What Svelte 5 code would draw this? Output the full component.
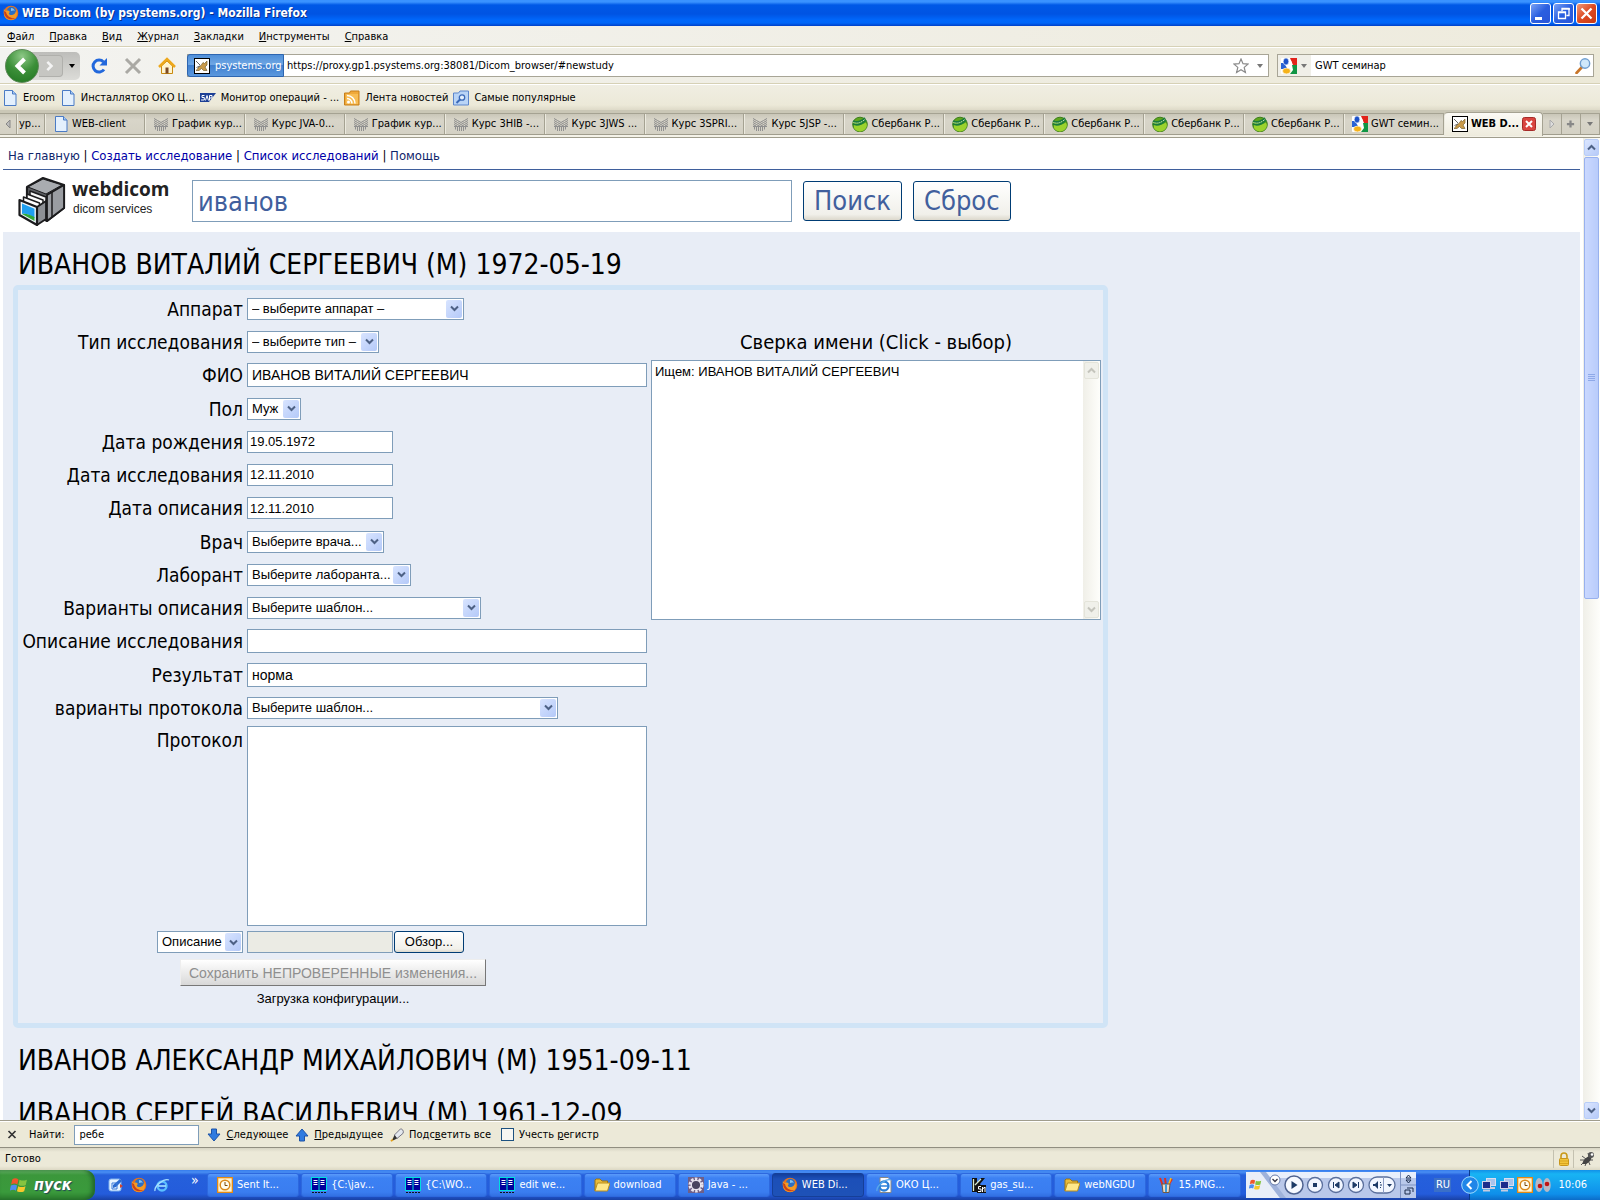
<script>
  const menu = [['Ф', 'айл'], ['П', 'равка'], ['В', 'ид'], ['Ж', 'урнал'], ['З', 'акладки'], ['И', 'нструменты'], ['С', 'правка']];
  const bookmarks = [
    { icon: 'page', label: 'Eroom' },
    { icon: 'page', label: 'Инсталлятор ОКО Ц...' },
    { icon: 'sap', label: 'Монитор операций - ...' },
    { icon: 'rss', label: 'Лента новостей' },
    { icon: 'smart', label: 'Самые популярные' }
  ];
  const tabs = [
    { icon: 'page', label: 'WEB-client' },
    { icon: 'course', label: 'График кур...' },
    { icon: 'course', label: 'Курс JVA-0...' },
    { icon: 'course', label: 'График кур...' },
    { icon: 'course', label: 'Курс 3HIB -...' },
    { icon: 'course', label: 'Курс 3JWS ...' },
    { icon: 'course', label: 'Курс 3SPRI...' },
    { icon: 'course', label: 'Курс 5JSP -...' },
    { icon: 'sber', label: 'Сбербанк Р...' },
    { icon: 'sber', label: 'Сбербанк Р...' },
    { icon: 'sber', label: 'Сбербанк Р...' },
    { icon: 'sber', label: 'Сбербанк Р...' },
    { icon: 'sber', label: 'Сбербанк Р...' },
    { icon: 'google', label: 'GWT семин...' }
  ];
  const fields = [
    { id: 'device', label: 'Аппарат', kind: 'select', value: '– выберите аппарат –', width: 217 },
    { id: 'type', label: 'Тип исследования', kind: 'select', value: '– выберите тип –', width: 132 },
    { id: 'name', label: 'ФИО', kind: 'text', value: 'ИВАНОВ ВИТАЛИЙ СЕРГЕЕВИЧ' },
    { id: 'sex', label: 'Пол', kind: 'select', value: 'Муж', width: 54 },
    { id: 'born', label: 'Дата рождения', kind: 'date', value: '19.05.1972' },
    { id: 'studied', label: 'Дата исследования', kind: 'date', value: '12.11.2010' },
    { id: 'described', label: 'Дата описания', kind: 'date', value: '12.11.2010' },
    { id: 'doctor', label: 'Врач', kind: 'select', value: 'Выберите врача...', width: 137 },
    { id: 'assistant', label: 'Лаборант', kind: 'select', value: 'Выберите лаборанта...', width: 164 },
    { id: 'variants', label: 'Варианты описания', kind: 'select', value: 'Выберите шаблон...', width: 234 },
    { id: 'description', label: 'Описание исследования', kind: 'text', value: '' },
    { id: 'result', label: 'Результат', kind: 'text', value: 'норма' },
    { id: 'protocols', label: 'варианты протокола', kind: 'select', value: 'Выберите шаблон...', width: 311 }
  ];
  const tasks = [
    { icon: 'clock', label: 'Sent It...' },
    { icon: 'far', label: '{C:\\jav...' },
    { icon: 'far', label: '{C:\\WO...' },
    { icon: 'far', label: 'edit we...' },
    { icon: 'folder', label: 'download' },
    { icon: 'gear', label: 'Java - ...' },
    { icon: 'firefox', label: 'WEB Di...', active: true },
    { icon: 'iedoc', label: 'ОКО Ц...' },
    { icon: 'kasm', label: 'gas_su...' },
    { icon: 'folder', label: 'webNGDU' },
    { icon: 'brushes', label: '15.PNG...' }
  ];
</script>

{#snippet icon(name)}
  <svg class="icon" viewBox="0 0 16 16" aria-hidden="true">
    {#if name === 'page'}
      <path d="M2.500.5h8l3.500 3.500v11.500h-11.500z" fill="#e4f0fd" stroke="#4b7bc4" /><path d="M10.500.5v3.500h3.500" fill="#a9ccf5" stroke="#4b7bc4" />
    {:else if name === 'sap'}
      <path d="M0 3h16l-7 9H0z" fill="#1c3f95" /><path d="M4.500 5.500H2v2h2.300V10H1M5.500 10.500 7 5.500l1.500 5M9.500 10.500v-5h2.500v2.500h-2" fill="none" stroke="#fff" />
    {:else if name === 'rss'}
      <path d="M.5 3h5l1-2H15v14H.5z" fill="#f0a93a" stroke="#c77f18" /><rect x="2" y="4" width="12" height="10" fill="#f7bd55" /><circle cx="4.500" cy="12" r="1.500" fill="#fff" /><path d="M3 8.500a5 5 0 0 1 5 5M3 5.500a8 8 0 0 1 8 8" fill="none" stroke="#fff" stroke-width="1.500" />
    {:else if name === 'smart'}
      <path d="M.5 3h5l1.500-2h8.500v14H.5z" fill="#b9d4f6" stroke="#5c86cc" /><circle cx="9" cy="7.500" r="2.700" fill="#e4f0fd" stroke="#3a69b8" stroke-width="1.300" /><path d="m7 9.500-3.500 3.500" stroke="#3a69b8" stroke-width="2" />
    {:else if name === 'course'}
      <path d="M1 2.500 4.500 4.500 8 6.500 11.500 4.500 15 2.500M1 4.500l3.500 2L8 8.500 11.500 6.500 15 4.500M1 6.500l3.500 2L8 10.500l3.500-2 3.500-2M1 8.500l3 1.500M15 8.500 12 10" fill="none" stroke="#8b8b8b" /><path d="M2.500 10.500v3M4.500 10.500v4.500M6.500 10.500v4.500M8.500 10.500v4.500M10.500 10.500v4.500M12.500 10.500v3M1 10.500h14" stroke="#909090" />
    {:else if name === 'sber'}
      <circle cx="8" cy="8.500" r="7.300" fill="#5fa61c" stroke="#3c7d1c" /><path d="M2 12a7 7 0 0 0 12 0c2-3 0-6-1-5-4 3-9 1-11 1z" fill="#9bd22e" /><path d="M1 5c4 2 8 1 12-3M1 8c5 2 9 0 13-4" stroke="#1c7c3c" stroke-width="1.800" fill="none" /><path d="M1.500 6.500c4 1.500 8 0 11.500-3.200" stroke="#e4fadc" fill="none" stroke-dasharray="1 1" />
    {:else if name === 'google'}
      <rect width="16" height="16" rx="1" fill="#fff" /><path d="M9 0h7v7h-4z" fill="#e2231a" /><path d="M11 7h5v9H9l3-4z" fill="#109544" /><path d="M0 5h3l3 5-3 1H0z" fill="#2a62d4" /><ellipse cx="5" cy="3.500" rx="2.800" ry="3.500" fill="#1d52c8" stroke="#fff" stroke-width=".6" /><ellipse cx="5.500" cy="13" rx="4" ry="2.900" fill="#f5b21a" stroke="#fff" stroke-width=".6" /><path d="M8.500 3c4 3-1 3 1 6" stroke="#fff" stroke-width="2" fill="none" />
    {:else if name === 'tomcat'}
      <rect x=".5" y=".5" width="15" height="15" fill="#fff" stroke="#000" /><path d="M2 12.500c2-1 2-4 5-5l2-3 1.500 1L13 3v4l-2 2 2 3.500H9.500l-2-2-2.500 2z" fill="#c99a4a" stroke="#7a6432" stroke-width=".7" /><path d="M2 3l4 4M2.500 9.500 6 8" stroke="#666" />
    {:else if name === 'firefox'}
      <circle cx="8" cy="8" r="7.300" fill="#e8731a" /><circle cx="8.500" cy="6.500" r="4.700" fill="#2c6fc4" /><path d="M8 3c2 0 3 1 4 3-2-1-3 0-4 0z" fill="#86c4f0" /><path d="M1 3c0 2 1 3 2 3 2-1 3 0 4 1-2 1-1 3 1 3 3 0 5-2 5-5 2 4 1 10-5 10S0 10 1 3z" fill="#f39a25" /><path d="M1 6c0 8 7 10 12 7-4 1-9-1-10-6z" fill="#c9401b" />
    {:else if name === 'clock'}
      <rect x=".5" y=".5" width="15" height="15" fill="#fff3d2" stroke="#e58a12" stroke-width="1.600" /><circle cx="8" cy="8" r="4.800" fill="#fffdf0" stroke="#d98a1c" stroke-width="1.500" /><path d="M8 5v3.500h2.500" fill="none" stroke="#7a4a0a" />
    {:else if name === 'far'}
      <rect x=".5" y=".5" width="15" height="13" fill="#00009c" stroke="#00dede" /><path d="M2.500 3.500h4M2.500 5.500h4M2.500 7.500h4M9.500 3.500h4M9.500 5.500h4M9.500 7.500h4" stroke="#fff" /><path d="M8 0v14" stroke="#00dede" /><path d="M1 15.500h14" stroke="#111" stroke-dasharray="2 1" />
    {:else if name === 'folder'}
      <path d="M1 14V3l1-1h4l2 2h5.500v2" fill="#e9bb3a" stroke="#9c7410" /><path d="M1 14 3.500 6H16l-2.500 8z" fill="#ffe88a" stroke="#b98d1c" />
    {:else if name === 'gear'}
      <rect width="16" height="16" fill="#6f5f88" /><circle cx="8" cy="8" r="5.800" fill="none" stroke="#e8e4ee" stroke-width="3.500" stroke-dasharray="2.400 1.250" /><circle cx="8" cy="8" r="4.700" fill="#4a4560" stroke="#e8e4ee" stroke-width="1.300" />
    {:else if name === 'ie' || name === 'iedoc'}
      {#if name === 'iedoc'}<path d="M4 .5h8l3 3v12H4z" fill="#fff" stroke="#888" />{/if}
      <circle cx="8" cy="9" r="4.500" fill="none" stroke={name === 'ie' ? '#5cc0ff' : '#2a7fd8'} stroke-width="2.300" /><path d="M4 9h8" stroke={name === 'ie' ? '#9fdcff' : '#2a7fd8'} stroke-width="1.700" /><path d="M1 14C0 9 10 1 15 3" fill="none" stroke={name === 'ie' ? '#a7e0ff' : '#5aa8ea'} stroke-width="1.300" />
    {:else if name === 'kasm'}
      <path d="M2 1h5v5l4-5h4l-5 6 4 6H9L7 10v5H2z" fill="#111" /><path d="M3.500 2v12M5 8l6-6" stroke="#d8ead0" stroke-width="1.300" /><path d="M7 8h9v8H7z" fill="#111" /><path d="M11 9.500H8.500V12H11v2.500H8M12.500 15v-5l1 1.500 1.500-1.500v5" fill="none" stroke="#fff" />
    {:else if name === 'brushes'}
      <path d="M5 9 2 1M8 9 7 1M10 9l4-7" stroke="#e03020" stroke-width="2" /><path d="m10 9 3-8" stroke="#f0c020" stroke-width="1.500" /><path d="M4 7h8l-1 8.500H5z" fill="#e8d9c6" stroke="#6d5a48" /><path d="M8 7v8" stroke="#3a9ad8" stroke-width="2" />
    {:else if name === 'mail'}
      <rect x="1" y="2" width="12" height="12" rx="2" fill="#eaf4ff" stroke="#7fb2ee" /><path d="M5 8 12 2l2 2-6 6-3 1z" fill="#2c6ad0" /><path d="M4 6h5v6H4z" fill="none" stroke="#3a79d8" /><path d="m12 7 3 2-3 2" fill="#d8432a" />
    {:else if name === 'net'}
      <rect x="5.500" y="1.500" width="9" height="7" fill="#a8c4ec" stroke="#d8def0" /><rect x="1.500" y="4.500" width="8" height="7" fill="#1c2c8c" stroke="#d0d4e8" /><path d="M2 13.500h7M9 11h5" stroke="#c8cce0" stroke-width="2" />
    {:else if name === 'dots'}
      <ellipse cx="4" cy="8" rx="3.700" ry="7" fill="#b8b8c4" /><ellipse cx="12" cy="8" rx="3.700" ry="7" fill="#b8b8c4" /><circle cx="5" cy="9" r="2.300" fill="#c01414" /><circle cx="12" cy="7" r="2.300" fill="#c01414" />
    {:else if name === 'flag'}
      <path d="M2 3c2-1.500 4-1 5.500 0L6.500 7.500C5 6.500 3 6.500 1 7.500z" fill="#f0562a" /><path d="M8.500 3.300c2 1 4 1 6.500 0L14 8c-2 1-4 1-6.500 0z" fill="#86c440" /><path d="M.8 8.500c2-1 4-1 5.500 0L5.200 13C4 12 2 12-.2 13z" fill="#4f8df0" /><path d="M7.300 9c2 1 4 1 6.500 0l-1.200 4.500c-2 1-4 1-6.400 0z" fill="#f8c82c" />
    {:else if name === 'lock'}
      <path d="M5 8V5a3 3 0 0 1 6 0v3" fill="none" stroke="#c99a1a" stroke-width="1.600" /><rect x="3.500" y="7.500" width="9" height="7" rx="1" fill="#f2c53a" stroke="#c8951a" /><path d="M4 10h8M4 12.500h8" stroke="#d9a520" />
    {:else if name === 'bug'}
      <path d="M2 14 12 4M1 9h5M3 5l4 3M6 15l2-5M11 14 9 9M14 9h-4M9 2l1 4" stroke="#555" /><path d="M4 13c-2-2 4-8 7-8s1 6-4 8z" fill="#444" /><circle cx="12" cy="4" r="3" fill="#555" /><circle cx="13" cy="3.500" r="1.300" fill="#fff" />
    {:else if name === 'pen'}
      <path d="M1 15c3-2 3-3 5-4" stroke="#e0a020" stroke-width="2" fill="none" /><path d="m5 8 3 4 7-6c1-3-1-5-3-5z" fill="#e4e8ee" stroke="#667" /><path d="m5 8 3 4-4 2-1-1z" fill="#333" />
    {:else if name === 'magnifier'}
      <path d="m7 9-5.500 6" stroke="#c8762a" stroke-width="2.600" stroke-linecap="round" /><circle cx="10" cy="5.500" r="4.700" fill="#cfe8fb" stroke="#6f9ed0" stroke-width="1.400" />
    {:else if name === 'star'}
      <path d="m8 1 2 4.700 5 .4-3.800 3.300L12.400 14.500 8 11.800l-4.400 2.700 1.200-5.100L1 6.100l5-.4z" fill="#fff" stroke="#8a8a8a" stroke-width="1.200" />
    {/if}
  </svg>
{/snippet}

{#snippet chevron(dir)}
  <svg class="chev" viewBox="0 0 9 7" aria-hidden="true">
    <path d={dir === 'up' ? 'M1 5.500 4.500 2 8 5.500' : 'M1 1.500 4.500 5 8 1.500'} fill="none" stroke="currentColor" stroke-width="2" />
  </svg>
{/snippet}

{#snippet picker(id, value, width, label)}
  <span class="picker" style="width: {width}px">
    <select {id} aria-label={label}><option>{value}</option></select>
    <span class="drop">{@render chevron('down')}</span>
  </span>
{/snippet}

<div class="desktop">
  <header class="title">
    {@render icon('firefox')}
    <strong>WEB Dicom (by psystems.org) - Mozilla Firefox</strong>
    <button class="win" aria-label="Свернуть"><svg viewBox="0 0 21 21"><path d="M4 14.500h7" stroke="#fff" stroke-width="3" /></svg></button>
    <button class="win" aria-label="Восстановить"><svg viewBox="0 0 21 21"><path d="M8 7V4.500h7v7h-2.500M4.500 8h7v6.500h-7zM4 8.500h8M8 5h8" fill="none" stroke="#fff" stroke-width="1.300" /></svg></button>
    <button class="win close" aria-label="Закрыть"><svg viewBox="0 0 21 21"><path d="m4.500 4.500 10 10m0-10-10 10" stroke="#fff" stroke-width="2.300" /></svg></button>
  </header>

  <nav class="menu">
    {#each menu as [key, rest]}<button><u>{key}</u>{rest}</button>{/each}
  </nav>

  <div class="toolbar">
    <div class="history">
      <button class="back" aria-label="Назад"><svg viewBox="0 0 32 32"><path d="m18.500 9-7 7 7 7" fill="none" stroke="#fff" stroke-width="4" /></svg></button>
      <button class="fwd" aria-label="Вперёд"><svg viewBox="0 0 24 24"><path d="m10 7 5 5-5 5" fill="none" stroke="#f4f4f4" stroke-width="3" /></svg></button>
      <span class="caret dark"></span>
    </div>
    <button class="tool" aria-label="Обновить"><svg viewBox="0 0 18 18"><path d="M14 12.500A6 6 0 1 1 13.500 5" fill="none" stroke="#2268dc" stroke-width="3" /><path d="M17 1v7.500H9.500z" fill="#2268dc" /></svg></button>
    <button class="tool" aria-label="Остановить"><svg viewBox="0 0 18 18"><path d="m2 2 14 14m0-14L2 16" stroke="#aaa9a4" stroke-width="3" /></svg></button>
    <button class="tool" aria-label="Домой"><svg viewBox="0 0 18 18"><path d="M3.500 9v7.500h11V9L9 4z" fill="#fff4cf" stroke="#c98a10" /><path d="M1 10 9 2l8 8" fill="none" stroke="#eda81c" stroke-width="2.500" /><path d="M7.500 10.500h3v6h-3z" fill="#7c4a24" /></svg></button>
    <div class="url">
      <span class="identity">{@render icon('tomcat')}psystems.org</span>
      <input aria-label="Адрес" value="https://proxy.gp1.psystems.org:38081/Dicom_browser/#newstudy" />
      {@render icon('star')}
      <span class="caret"></span>
    </div>
    <div class="search">
      <span class="engine">{@render icon('google')}<span class="caret"></span></span>
      <input aria-label="Поиск" value="GWT семинар" />
      {@render icon('magnifier')}
    </div>
  </div>

  <nav class="bookmarks">
    {#each bookmarks as b}<button>{@render icon(b.icon)}{b.label}</button>{/each}
  </nav>

  <div class="tabs">
    <button class="scroll" aria-label="Влево"><svg viewBox="0 0 6 10"><path d="M5 1 1 5l4 4z" fill="#bbb" stroke="#888" /></svg></button>
    <button class="tab part">ур...</button>
    {#each tabs as t}<button class="tab">{@render icon(t.icon)}<span>{t.label}</span></button>{/each}
    <button class="tab active">{@render icon('tomcat')}<span>WEB D...</span>
      <svg class="x" viewBox="0 0 14 14"><rect x=".5" y=".5" width="13" height="13" rx="2" fill="#d9453f" stroke="#a52a28" /><path d="m4 4 6 6m0-6-6 6" stroke="#fff" stroke-width="2" /></svg>
    </button>
    <button class="scroll" aria-label="Вправо"><svg viewBox="0 0 6 10"><path d="m1 1 4 4-4 4z" fill="#ddd" stroke="#aaa" /></svg></button>
    <button class="scroll" aria-label="Новая вкладка"><svg class="plus" viewBox="0 0 10 10"><path d="M5 1v8M1 5h8" stroke="#888" stroke-width="2.500" /></svg></button>
    <button class="scroll" aria-label="Список вкладок"><span class="caret"></span></button>
  </div>

  <div class="view">
    <main>
      <nav class="links">
        <a href="#main">На главную</a> | <a class="fresh" href="#newstudy">Создать исследование</a> | <a class="fresh" href="#studies">Список исследований</a> | <a href="#help">Помощь</a>
      </nav>
      <form class="find">
        <div class="logo">
          <svg viewBox="0 0 48 50" aria-hidden="true">
            <g stroke="#1b1b1d" stroke-linejoin="round">
              <path d="M9 11 25 2l21 7v23L29 45 9 34z" fill="#5c5e62" stroke-width="2.200" />
              <path d="M10 11 25 3l19 6-16 9z" fill="#a9acb0" stroke-width="1" />
              <path d="m29 19 17-10v23L29 45z" fill="#9a9da2" stroke-width="1.800" />
              <path d="m34 16v25" stroke-width="1.500" />
              <path d="m12 15 16 6v18l-16-9z" fill="#f4f4f4" stroke-width="1.500" />
              <path d="m9 18 16 6v18L9 33z" fill="#fff" stroke-width="1.500" />
              <path d="m5.500 21 16 6v18l-16-9z" fill="#fff" stroke-width="1.500" />
              <path d="m19 31 9-6v18l-9 6z" fill="#8d9095" stroke-width="1.800" />
              <path d="m1.500 24 17.500 7v18L1.500 39z" fill="#eef6fb" stroke-width="2.200" />
            </g>
            <path d="m4 27.500 12.500 5.200v9.300C12 39 8 37 4 38z" fill="#1f9ff0" />
            <path d="M4 38c4-1 8 1 12.500 3v4z" fill="#2fa83a" />
          </svg>
          <div><b>webdicom</b><small>dicom services</small></div>
        </div>
        <input aria-label="Пациент" value="иванов" />
        <button type="button">Поиск</button>
        <button type="button">Сброс</button>
      </form>

      <section class="results">
        <h2>ИВАНОВ ВИТАЛИЙ СЕРГЕЕВИЧ (М) 1972-05-19</h2>
        <form class="study">
          <div class="fields">
            {#each fields as f}
              <label for={f.id}>{f.label}</label>
              <div class="control">
                {#if f.kind === 'select'}
                  {@render picker(f.id, f.value, f.width, null)}
                {:else}
                  <input id={f.id} class={f.kind} value={f.value} />
                {/if}
              </div>
            {/each}
            <label class="top" for="protocol">Протокол</label>
            <textarea id="protocol"></textarea>
            <div class="kind">{@render picker('filekind', 'Описание', 86, 'Вид файла')}</div>
            <div class="file"><input class="date" aria-label="Файл" disabled /><button type="button">Обзор...</button></div>
            <div class="save">
              <button type="button" disabled>Сохранить НЕПРОВЕРЕННЫЕ изменения...</button>
              <p>Загрузка конфигурации...</p>
            </div>
          </div>
          <div class="check">
            <h3>Сверка имени (Click - выбор)</h3>
            <div class="matches">
              <p>Ищем: ИВАНОВ ВИТАЛИЙ СЕРГЕЕВИЧ</p>
              <div class="bar off"><span class="arrow">{@render chevron('up')}</span><span class="arrow">{@render chevron('down')}</span></div>
            </div>
          </div>
        </form>
        <h2>ИВАНОВ АЛЕКСАНДР МИХАЙЛОВИЧ (М) 1951-09-11</h2>
        <h2>ИВАНОВ СЕРГЕЙ ВАСИЛЬЕВИЧ (М) 1961-12-09</h2>
      </section>
    </main>
    <div class="bar">
      <span class="arrow">{@render chevron('up')}</span>
      <span class="thumb"><svg viewBox="0 0 8 8"><path d="M0 .5h7M0 2.500h7M0 4.500h7M0 6.500h7" stroke="#8fa9e8" /></svg></span>
      <span class="rest"></span>
      <span class="arrow">{@render chevron('down')}</span>
    </div>
  </div>

  <div class="findbar">
    <button class="closefind" aria-label="Закрыть панель"><svg viewBox="0 0 9 9"><path d="m1 1 7 7m0-7L1 8" stroke="#333" stroke-width="1.700" /></svg></button>
    <label for="findtext">Найти:</label>
    <input id="findtext" value="ребе" />
    <button><svg viewBox="0 0 13 14"><path d="M4 1h5v5h3.500l-6 7-6-7H4z" fill="#2f7be0" stroke="#1c53a8" /></svg><span><u>С</u>ледующее</span></button>
    <button><svg viewBox="0 0 13 14"><path d="M4 13h5V8h3.500l-6-7-6 7H4z" fill="#2f7be0" stroke="#1c53a8" /></svg><span><u>П</u>редыдущее</span></button>
    <button>{@render icon('pen')}<span>Подс<u>в</u>етить все</span></button>
    <label class="case"><input type="checkbox" /><span>Учесть <u>р</u>егистр</span></label>
  </div>

  <div class="status">
    <span class="ready">Готово</span>
    <span class="cell">{@render icon('lock')}</span>
    <span class="cell">{@render icon('bug')}</span>
  </div>

  <footer class="taskbar">
    <button class="start">{@render icon('flag')}<b>пуск</b></button>
    <div class="quick">{@render icon('mail')}{@render icon('firefox')}{@render icon('ie')}<span>»</span></div>
    <div class="tasks">
      {#each tasks as t}<button class:active={t.active}>{@render icon(t.icon)}<span>{t.label}</span></button>{/each}
    </div>
    <div class="media">
      <svg viewBox="0 0 170 26" aria-hidden="true">
        <rect width="170" height="26" fill="#b9c8ea" /><path d="M0 0h170v6H0z" fill="#e8effc" /><path d="M0 0h14l20 26H0z" fill="#e9eef8" /><path d="M14 0h6l20 26h-6z" fill="#9fb2da" />
        <circle cx="29" cy="8" r="5" fill="#fff" stroke="#667aa8" /><path d="m26.500 7 2.500 2.500L31.500 7" fill="none" stroke="#334" stroke-width="1.300" />
        <circle cx="48" cy="13" r="9" fill="#f6f9ff" stroke="#4f6390" stroke-width="1.500" /><path d="m45.500 9 6 4-6 4z" fill="#1d3a66" />
        <circle cx="69" cy="13" r="7.500" fill="#f2f6ff" stroke="#5a6f9c" stroke-width="1.300" /><path d="M67 11h4v4h-4z" fill="#1d3a66" />
        <circle cx="90" cy="13" r="7.500" fill="#f2f6ff" stroke="#5a6f9c" stroke-width="1.300" /><path d="M87.500 10v6M93 10v6l-4-3z" fill="#1d3a66" stroke="#1d3a66" />
        <circle cx="110" cy="13" r="7.500" fill="#f2f6ff" stroke="#5a6f9c" stroke-width="1.300" /><path d="M112.500 10v6M107 10v6l4-3z" fill="#1d3a66" stroke="#1d3a66" />
        <rect x="123" y="5" width="26" height="16" rx="8" fill="#f2f6ff" stroke="#5a6f9c" stroke-width="1.300" /><path d="M137.500 5v16" stroke="#8c9cc4" /><path d="M127 12h2l3-3v8l-3-3h-2zM141 12h5l-2.500 3z" fill="#1d3a66" /><path d="M134 11l1-1m-1 3h2m-2 2 1 1" stroke="#1d3a66" />
        <path d="M154.500 0v26M155 13h15" stroke="#7f92c0" /><path d="m160 6 2.500-3L165 6zM160 8l2.500 3L165 8zM159 18h5v4h-5zM161 16h6v4" fill="none" stroke="#1c2c4c" />
      </svg>
      <span class="wm">{@render icon('flag')}</span>
    </div>
    <span class="lang">RU</span>
    <div class="tray">
      <svg class="hide" viewBox="0 0 18 18"><circle cx="9" cy="9" r="8.300" fill="#1f86e8" stroke="#9fdcff" /><path d="m10.500 5-4 4 4 4" fill="none" stroke="#fff" stroke-width="2" /></svg>
      {@render icon('net')}{@render icon('net')}{@render icon('clock')}{@render icon('dots')}
      <time>10:06</time>
    </div>
  </footer>
</div>

<style>
  :global(body) { margin: 0; }
  * { box-sizing: border-box; }
  .desktop { height: 100vh; display: flex; flex-direction: column; overflow: hidden; background: #ece9d8; color: #000; font: 11px/14px 'DejaVu Sans Condensed', 'Noto Sans', sans-serif; }
  button, input, select, textarea { font: inherit; color: inherit; border-radius: 0; margin: 0; }
  button { border: 0; background: none; padding: 0; white-space: nowrap; }
  input { border: 0; outline: 0; min-width: 0; }
  .icon { width: 16px; height: 16px; flex: none; }
  .caret { width: 0; height: 0; flex: none; border: 3px solid transparent; border-top: 4px solid #777; border-bottom: 0; }
  .dark { border-top-color: #000; }

  .title { height: 26px; flex: none; display: flex; align-items: center; gap: 2px; padding: 0 3px; background: linear-gradient(#3a92ff 0 2px, #0058e6 5px, #0054e3 14px, #0067fb 20px, #0066f8 23px, #0040c8); color: #fff; }
  .title strong { flex: 1; padding-left: 1px; font-size: 12px; font-weight: 700; text-shadow: 1px 1px #0a2f8a; }
  .win { width: 21px; height: 21px; border: 1px solid #fff; border-radius: 3px; background: linear-gradient(135deg, #7aa2f5, #2a5fe0 50%, #2a55d8); }
  .win svg { display: block; width: 21px; height: 21px; }
  .close { background: linear-gradient(135deg, #f0997a, #dd4a22 50%, #c93a14); }

  .menu { height: 21px; flex: none; display: flex; gap: 15px; align-items: center; padding: 1px 7px 0; background: linear-gradient(90deg, #f3f3f0, #eeebdd); border-bottom: 1px solid #d6d1b6; }
  .toolbar { height: 37px; flex: none; display: flex; align-items: center; background: linear-gradient(90deg, #f3f3f0, #ece9d8); border-top: 1px solid #fff; border-bottom: 1px solid #d6d1b6; padding: 0 6px 0 5px; }
  .history { display: flex; align-items: center; height: 28px; width: 75px; border-radius: 14px 5px 5px 14px; background: linear-gradient(#bdbdba, #dcdcd8); }
  .back { width: 34px; height: 34px; flex: none; border-radius: 50%; border: 1px solid #5d8a58; background: radial-gradient(circle at 50% 20%, #8dc886, #3b8f38 50%, #1f7420); }
  .back svg { display: block; }
  .fwd { width: 24px; height: 22px; margin-right: 6px; border: 1px solid #b0b0ac; border-left: 0; border-radius: 0 4px 4px 0; background: #c6c6c2; }
  .fwd svg { display: block; height: 20px; }
  .tool { width: 18px; height: 18px; margin-left: 16px; }
  .tool:first-of-type { margin-left: 10px; }
  .tool svg { display: block; }
  .url, .search { height: 23px; display: flex; align-items: center; background: #fff; border: 1px solid #a8a596; }
  .url { flex: 1; margin-left: 11px; gap: 8px; padding-right: 5px; }
  .url input { flex: 1; height: 21px; margin-left: -5px; padding: 0; }
  .identity { height: 23px; margin: -1px 0 -1px -1px; width: 97px; flex: none; display: flex; align-items: center; gap: 5px; padding-left: 6px; color: #fff; border: 1px solid #2d65b0; border-radius: 3px 0 0 3px; background: linear-gradient(#4f8fd8, #6fa6e4 45%, #3f7fcf 50%, #5b98de); }
  .search { width: 317px; margin-left: 8px; padding-right: 2px; }
  .engine { height: 21px; width: 33px; flex: none; display: flex; align-items: center; gap: 4px; padding-left: 3px; background: #f0efe8; }
  .search input { flex: 1; padding: 0 4px; }

  .bookmarks { height: 26px; flex: none; display: flex; align-items: center; gap: 5px; padding: 0 3px 0 2px; border-top: 1px solid #fff; background: linear-gradient(#f0eee2, #ece9d8 80%, #dedac8); }
  .bookmarks button { display: flex; align-items: center; gap: 5px; }

  .tabs { height: 28px; flex: none; display: flex; align-items: flex-start; padding-top: 3px; background: linear-gradient(#cac7b6 0 3px, #c9c6b5 24px, #a09d8d 24px 25px, #f4f2e8 25px 27px, #a09d8d 27px); }
  .tab, .scroll { height: 21px; display: flex; align-items: center; border: 1px solid #a5a292; border-left: 0; border-bottom: 0; background: linear-gradient(#c9c6b8, #d8d5c9 30%, #d4d1c4); }
  .tab { flex: 1 1 0; min-width: 0; overflow: hidden; gap: 3px; padding-left: 8px; box-shadow: inset 1px 0 #eceadf; }
  .tab span { overflow: hidden; }
  .part { flex: 0 0 28px; padding-left: 2px; }
  .scroll { width: 19px; flex: none; justify-content: center; }
  .scroll:first-child { width: 17px; }
  .scroll svg { width: 6px; height: 10px; }
  .scroll .plus { width: 9px; }
  .active.tab { height: 24px; flex: 0 0 99px; margin-top: -1px; padding: 0 0 1px 8px; font-weight: 700; background: linear-gradient(#fbfaf5, #eeebdd); border-radius: 4px 4px 0 0; }
  .x { width: 14px; height: 14px; flex: none; }

  .view { flex: 1; min-height: 0; display: flex; background: #fff; border-bottom: 1px solid #a09d8d; }
  main { flex: 1; min-width: 0; overflow: hidden; padding: 0 3px; }
  .links { height: 32px; border-bottom: 1px solid #3f5f9c; padding: 10px 5px 0; font-size: 13px; line-height: 16px; white-space: nowrap; }
  a { color: #10256b; text-decoration: none; }
  .fresh { color: #0000a8; }
  .find { height: 62px; display: flex; align-items: center; color: #415f9d; font-size: 27px; }
  .logo { width: 189px; flex: none; display: flex; gap: 4px; padding-left: 15px; color: #222; }
  .logo svg { width: 48px; height: 50px; flex: none; }
  .logo b, .logo small { display: block; }
  .logo b { font: 700 19px/26px 'Open Sans', sans-serif; padding-left: 2px; }
  .logo small { font: 12px/14px 'Liberation Sans', sans-serif; padding-left: 3px; }
  .find input { width: 600px; height: 42px; border: 1px solid #7f9db9; padding: 0 5px; }
  .find button { height: 40px; padding: 0 10px; margin-left: 11px; }
  .find button, .file button { border: 1px solid #003c74; border-radius: 3px; background: linear-gradient(#fff, #f1f0ea 85%, #dcd8cc); }

  .results { background: #e8edf6; padding: 10px 10px 400px; }
  h2 { margin: 0; padding: 2px 0 0 5px; font-size: 28px; font-weight: 400; line-height: 41px; height: 43px; white-space: nowrap; }
  h2 + h2, .study + h2 { margin-top: 10px; }
  .study { display: flex; gap: 4px; width: max-content; border: 5px solid #d0e4f6; border-radius: 5px; padding: 2px 2px 0; font: 13px/16px 'Liberation Sans', sans-serif; height: 743px; }
  .fields { display: grid; grid-template-columns: 223px 400px; column-gap: 4px; grid-template-rows: 33px 33px 34px 33px 33px 33px 34px 33px 33px 33px 34px 33px 33px 205px 26px 1fr; align-items: center; }
  label, h3 { font: 20px/24px 'DejaVu Sans Condensed', 'Noto Sans', sans-serif; white-space: nowrap; }
  .fields label { justify-self: end; font-size: 19px; }
  .control { display: flex; }
  .picker { display: inline-grid; height: 22px; }
  .picker select, .drop { grid-area: 1 / 1; }
  .picker select { appearance: none; width: 100%; background: #fff; border: 1px solid #7f9db9; padding: 0 4px; outline: 0; }
  .drop { justify-self: end; align-self: center; width: 16px; height: 18px; margin-right: 2px; display: grid; place-items: center; border-radius: 2px; background: linear-gradient(135deg, #d8e4ff, #b4c9f8); color: #4d6185; pointer-events: none; }
  .chev { width: 9px; height: 7px; }
  .text, .date { border: 1px solid #7f9db9; background: #fff; }
  .text { width: 100%; height: 24px; padding: 0 4px; font-size: 14px; }
  .date { width: 146px; height: 22px; padding: 0 2px; }
  .date:disabled { background: #ebebe4; }
  .fields .top { align-self: start; padding-top: 4px; }
  textarea { width: 400px; height: 200px; align-self: start; margin-top: 2px; border: 1px solid #7f9db9; resize: none; outline: 0; background: #fff; display: block; }
  .kind { justify-self: end; display: flex; }
  .file { display: flex; gap: 1px; }
  .file button { width: 70px; height: 22px; }
  .save { grid-column: 1 / 3; align-self: start; width: 626px; padding-top: 4px; }
  .save button { display: block; margin-left: 160px; width: 306px; height: 27px; font-size: 14px; color: #8f8f8f; border: 1px solid #777; border-top-color: #eee; border-left-color: #eee; background: linear-gradient(#fff, #d8d8d8); }
  .save p { margin: 5px 0 0; width: 626px; text-align: center; }
  .check { width: 450px; padding-top: 38px; }
  h3 { margin: 0 0 6px; font-weight: 400; text-align: center; }
  .matches { height: 260px; display: flex; justify-content: space-between; background: #fff; border: 1px solid #7f9db9; }
  .matches p { margin: 3px; }
  .bar { width: 17px; flex: none; display: flex; flex-direction: column; justify-content: space-between; background: linear-gradient(90deg, #f0efe8, #fefefb); color: #4d6185; }
  .arrow { height: 17px; margin: 1px; flex: none; display: grid; place-items: center; border-radius: 2px; background: linear-gradient(135deg, #dbe6ff, #b6caf8); border: 1px solid #b8cdf8; }
  .off { color: #c4c4bc; }
  .off .arrow { background: #f0f0ea; border-color: #e4e4da; }
  .thumb { flex: 443; margin: 0 1px; display: grid; place-items: center; border: 1px solid #98b1ee; border-radius: 2px; background: linear-gradient(90deg, #cad8ff, #b9ccfb); }
  .thumb svg { width: 8px; height: 8px; }
  .rest { flex: 505; }

  .findbar { height: 27px; flex: none; display: flex; align-items: center; padding-left: 7px; border-top: 1px solid #fff; border-bottom: 1px solid #918e80; }
  .findbar label { font: inherit; }
  .findbar button { display: flex; align-items: center; gap: 5px; margin-right: 7px; }
  .findbar button svg { width: 14px; height: 14px; }
  .findbar .closefind { margin-right: 12px; }
  .findbar .closefind svg { width: 10px; height: 9px; }
  #findtext { width: 125px; height: 20px; margin: 0 8px 0 10px; padding: 0 4px; border: 1px solid #7f9db9; background: #fff; }
  .findbar .case { display: flex; align-items: center; gap: 5px; margin-left: 3px; }
  .case input { appearance: none; width: 13px; height: 13px; border: 1px solid #1c5180; background: #f6f6f2; }
  .status { height: 22px; flex: none; display: flex; align-items: center; padding-left: 5px; background: linear-gradient(#d8d5c4, #ece9d8 4px 18px, #dcd8c4); }
  .ready { flex: 1; }
  .cell { width: 20px; height: 18px; display: grid; place-items: center; border-left: 1px solid #c4c1b0; }
  .cell + .cell { width: 27px; }

  .taskbar { height: 30px; flex: none; display: flex; align-items: center; color: #fff; background: linear-gradient(#3a80ee 0 1px, #4a90f4 2px, #2560dc 5px, #245cdb 24px, #1941a5); }
  .start { align-self: stretch; width: 95px; flex: none; display: flex; align-items: center; gap: 6px; padding-left: 10px; border-radius: 0 10px 10px 0; background: linear-gradient(#6cb86c, #3b973b 5px, #3a9a3c 22px, #2a7a2c); box-shadow: inset -3px 0 4px #22662a; }
  .start .icon { width: 18px; height: 18px; }
  .start b { font: italic 700 16px/20px 'DejaVu Sans Condensed', 'Open Sans', sans-serif; text-shadow: 1px 1px 1px #245; }
  .quick { width: 112px; flex: none; display: flex; align-items: center; gap: 7px; padding-left: 13px; }
  .quick span { margin: -10px 0 0 14px; font-size: 14px; }
  .tasks { flex: 1; min-width: 0; display: flex; gap: 2px; }
  .tasks button { flex: 1 1 0; min-width: 0; height: 24px; overflow: hidden; display: flex; align-items: center; gap: 4px; padding-left: 9px; border-radius: 3px; border: 1px solid #2d68de; background: linear-gradient(#5a9bfa, #3c81f3 4px, #3a7df0 18px, #3270e2); }
  .tasks .active { background: linear-gradient(#123e9c, #1c4fb8 5px, #1e52b7); border-color: #163f98; }
  .media { position: relative; width: 170px; height: 26px; flex: none; margin-left: 6px; }
  .media > svg { display: block; width: 170px; height: 26px; }
  .wm { position: absolute; left: 3px; top: 6px; }
  .wm .icon { width: 13px; height: 13px; }
  .lang { margin-left: 18px; width: 17px; background: #3a6fc8; text-align: center; }
  .tray { align-self: stretch; display: flex; align-items: center; gap: 2px; margin-left: 18px; padding-right: 13px; background: linear-gradient(#1290e8, #18b4f4 4px, #0f8fea 24px, #0c6cc8); border-left: 1px solid #0a3a8c; }
  .hide { width: 18px; height: 18px; margin-left: -9px; }
  .tray time { margin-left: 5px; }
</style>
